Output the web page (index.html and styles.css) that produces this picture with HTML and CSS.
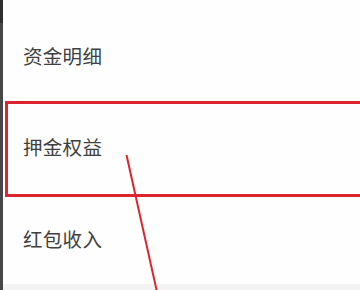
FILE: index.html
```html
<!DOCTYPE html>
<html lang="zh-CN">
<head>
<meta charset="utf-8">
<link rel="stylesheet" href="styles.css">
</head>
<body>
<div class="screen">
  <div class="edge"><div class="edge-top"></div></div>
  <div class="main">
    <ul class="menu">
      <li class="item">资金明细</li>
      <li class="item">押金权益</li>
      <li class="item">红包收入</li>
    </ul>
    <div class="footer-band"></div>
  </div>
  <div class="mark-box"></div>
  <svg class="mark-line" width="360" height="290" viewBox="0 0 360 290">
    <line x1="126.5" y1="155" x2="157" y2="292" stroke="#dc2530" stroke-width="2"/>
  </svg>
</div>
</body>
</html>
```
FILE: styles.css
```css
html, body {
  margin: 0;
  padding: 0;
  background: #ffffff;
}
.screen {
  position: relative;
  width: 360px;
  height: 290px;
  overflow: hidden;
  display: flex;
  font-family: "Noto Sans CJK SC", "Noto Sans", sans-serif;
}
.edge {
  width: 3px;
  background: #474747;
  flex: none;
}
.edge-top {
  height: 23px;
  background: #2e2e2e;
}
.main {
  flex: 1;
  display: flex;
  flex-direction: column;
  background: #fefefe;
}
.menu {
  list-style: none;
  margin: 0;
  padding: 9.5px 0 0 0;
}
.item {
  height: 91.5px;
  display: flex;
  align-items: center;
  padding-left: 20px;
  font-size: 19.5px;
  color: #404040;
  letter-spacing: 0.3px;
}
.footer-band {
  flex: 1;
  background: #f3f3f3;
}
.mark-box {
  position: absolute;
  left: 5px;
  top: 101px;
  width: 380px;
  height: 90px;
  border: 3px solid #dc2530;
}
.mark-line {
  position: absolute;
  left: 0;
  top: 0;
}
```
